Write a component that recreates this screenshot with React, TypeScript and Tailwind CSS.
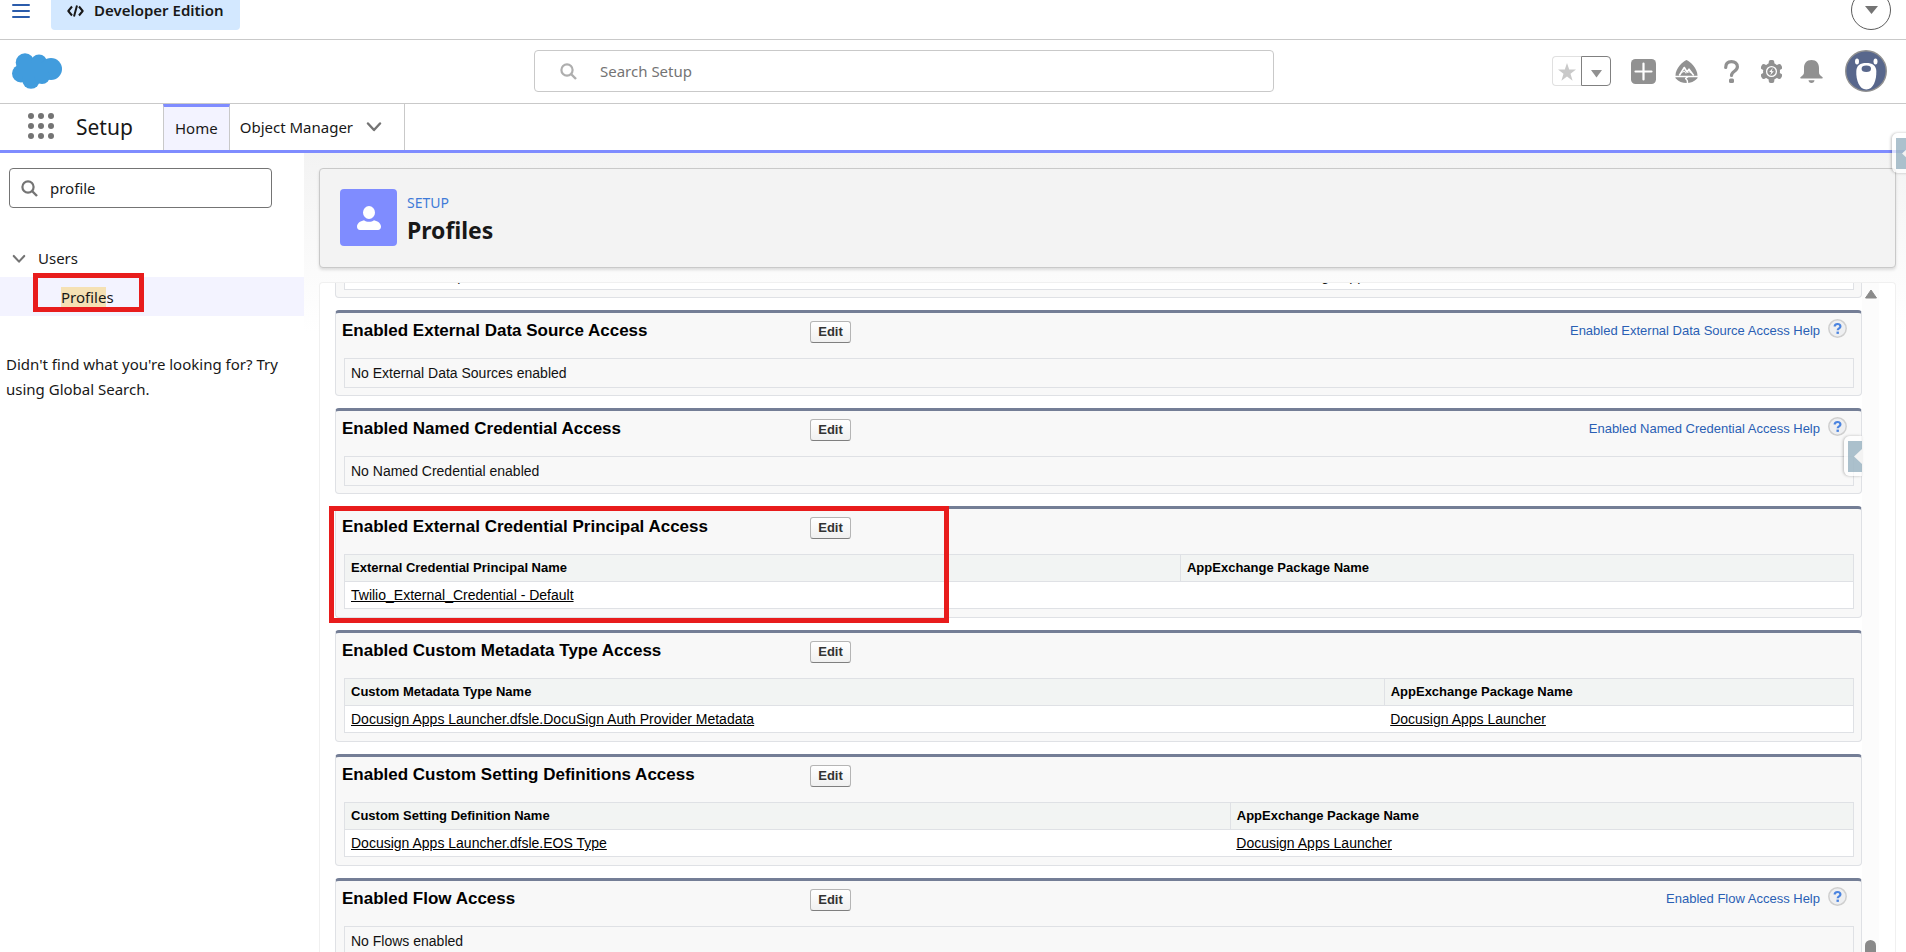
import React, { useState } from 'react';

interface Column {
  label: string;
  width: string;
}

interface Section {
  title: string;
  help?: string;
  empty?: string;
  columns?: Column[];
  row?: string[];
}

const SECTIONS: Section[] = [
  {
    title: 'Enabled External Data Source Access',
    help: 'Enabled External Data Source Access Help',
    empty: 'No External Data Sources enabled',
  },
  {
    title: 'Enabled Named Credential Access',
    help: 'Enabled Named Credential Access Help',
    empty: 'No Named Credential enabled',
  },
  {
    title: 'Enabled External Credential Principal Access',
    columns: [
      { label: 'External Credential Principal Name', width: '55.4%' },
      { label: 'AppExchange Package Name', width: '44.6%' },
    ],
    row: ['Twilio_External_Credential - Default', ''],
  },
  {
    title: 'Enabled Custom Metadata Type Access',
    columns: [
      { label: 'Custom Metadata Type Name', width: '68.9%' },
      { label: 'AppExchange Package Name', width: '31.1%' },
    ],
    row: ['Docusign Apps Launcher.dfsle.DocuSign Auth Provider Metadata', 'Docusign Apps Launcher'],
  },
  {
    title: 'Enabled Custom Setting Definitions Access',
    columns: [
      { label: 'Custom Setting Definition Name', width: '58.7%' },
      { label: 'AppExchange Package Name', width: '41.3%' },
    ],
    row: ['Docusign Apps Launcher.dfsle.EOS Type', 'Docusign Apps Launcher'],
  },
  {
    title: 'Enabled Flow Access',
    help: 'Enabled Flow Access Help',
    empty: 'No Flows enabled',
  },
];

const HIGHLIGHTED = 'Enabled External Credential Principal Access';

const SearchIcon = ({ className }: { className: string }) => (
  <svg className={className} viewBox="0 0 17 17" fill="none" stroke="currentColor" aria-hidden="true">
    <circle cx="7" cy="7" r="5.6" strokeWidth="2.2" />
    <path d="M11 11l5 5" strokeWidth="2.4" />
  </svg>
);

const Chevron = ({ className }: { className: string }) => (
  <svg className={className} viewBox="0 0 16 10" fill="none" stroke="currentColor" strokeWidth="2.4" strokeLinecap="round" strokeLinejoin="round" aria-hidden="true">
    <path d="M2 1.5l6 6.5 6-6.5" />
  </svg>
);

const TopBar: React.FC = () => (
  <div className="flex h-10 items-start border-b border-[#c9c9c9]">
    <button aria-label="Menu" className="ml-3 pt-1 text-[#2b5cab]">
      <svg className="h-[14px] w-[18px]" viewBox="0 0 18 14" fill="none" stroke="currentColor" strokeWidth="2" strokeLinecap="round">
        <path d="M1 1h16M1 7h16M1 13h16" />
      </svg>
    </button>
    <div className="ml-[21px] flex h-[30px] items-start gap-[10px] rounded-b-sm bg-[#d3e8ff] px-4 text-[15px] leading-5 font-semibold">
      <svg className="mt-[5px] h-3 w-[17px]" viewBox="0 0 17 12" fill="none" stroke="currentColor" strokeWidth="2" strokeLinejoin="round" aria-hidden="true">
        <path d="M5 1.5L1.3 6 5 10.500M12 1.500L15.700 6 12 10.500M10 0.500L7 11.500" />
      </svg>
      <span>Developer Edition</span>
    </div>
    <button aria-label="More" className="mr-[15px] ml-auto -mt-[10px] flex h-10 w-10 items-center justify-center rounded-full border border-[#5c5c5c]">
      <svg className="h-2 w-[13px] text-[#747474]" viewBox="0 0 13 8" fill="currentColor"><path d="M0 0h13L6.500 8z" /></svg>
    </button>
  </div>
);

const HeaderIcons: React.FC = () => (
  <div className="flex items-center text-[#919191]">
    <div className="flex h-[30px] w-[59px]">
      <button aria-label="Favorite" className="flex w-[29px] items-center justify-center rounded-l border border-r-0 border-[#e0e0e0] text-[#c9c9c9]">
        <svg className="mt-[2px] h-[18px] w-[18px]" viewBox="0 0 18 18" fill="currentColor"><path d="M9 0l2.200 6.600H18l-5.500 4.200 2.100 7L9 13.600 3.400 17.800l2.100-7L0 6.600h6.800z" /></svg>
      </button>
      <button aria-label="Favorites list" className="flex w-[30px] items-center justify-center rounded-r border border-[#808080]">
        <svg className="mt-[6px] h-2 w-[11px]" viewBox="0 0 11 8" fill="currentColor"><path d="M0 0h11L5.500 7.500z" /></svg>
      </button>
    </div>
    <button aria-label="Global actions" className="ml-5">
      <svg className="h-[25px] w-[25px]" viewBox="0 0 25 25">
        <rect width="25" height="25" rx="4.500" fill="currentColor" />
        <path d="M12.500 4.500v16M4.500 12.500h16" stroke="#fff" strokeWidth="2.200" strokeLinecap="round" />
      </svg>
    </button>
    <button aria-label="Guidance Center" className="ml-[19px]">
      <svg className="h-[23px] w-[23px]" viewBox="0 0 23 23">
        <path d="M11.500 0C15 1.500 22.500 8 22.500 15.500c0 1 .3 2.500-.3 3-3 3-6.500 4.500-10.700 4.500S3.500 21.500.800 18.500c-.6-.5-.3-2-.3-3C.500 8 8 1.500 11.500 0z" fill="currentColor" />
        <path d="M0 16.500h23" stroke="#fff" strokeWidth="1.500" />
        <path d="M4.300 15.500l5-8 2.700 4.500 2-2.800 4.700 6.300" fill="none" stroke="#fff" strokeWidth="1.600" strokeLinejoin="round" />
        <path d="M7.500 12.500l1.800-1.500 1.700 2.500M12.500 13l1.500-1.500 2 1.500" fill="none" stroke="#fff" strokeWidth="1" />
        <path d="M13 16.500c-1.500 1.500-3.500 1.500-1.500 3 1 .8 1.200 1.500.8 3.500" fill="none" stroke="#fff" strokeWidth="1.500" />
      </svg>
    </button>
    <button aria-label="Help" className="ml-[26px]">
      <svg className="h-[23px] w-[15px]" viewBox="0 0 15 23">
        <path d="M1.700 7.500C1.700 3.700 4 1.600 7.500 1.600s5.900 2 5.900 5.200c0 4.700-5.900 4.200-5.900 8.700" fill="none" stroke="currentColor" strokeWidth="3.200" strokeLinecap="round" />
        <rect x="5" y="18.500" width="5" height="4.500" rx="1.500" fill="currentColor" />
      </svg>
    </button>
    <button aria-label="Setup" className="ml-[22px]">
      <svg className="h-[23px] w-[21px]" viewBox="0 0 21 23">
        <g fill="currentColor">
          <circle cx="10.500" cy="11.500" r="8.500" />
          <rect x="7.700" y="0" width="5.600" height="23" rx="2" />
          <rect x="7.700" y="0" width="5.600" height="23" rx="2" transform="rotate(60 10.500 11.500)" />
          <rect x="7.700" y="0" width="5.600" height="23" rx="2" transform="rotate(120 10.500 11.500)" />
        </g>
        <circle cx="10.500" cy="11.500" r="4.900" fill="none" stroke="#fff" strokeWidth="1.300" />
        <path d="M11.800 8L8.300 12h2l-1 3.300 3.500-4.100h-2.100z" fill="#fff" />
      </svg>
    </button>
    <button aria-label="Notifications" className="ml-[18px]">
      <svg className="h-[23px] w-[23px]" viewBox="0 0 23 23" fill="currentColor">
        <path d="M11.500 0C6.500 0 4 3.300 4 8v4c0 2.500-1.200 3.600-3 4.700-1 .6-1 1.800 0 1.800h21c1 0 1-1.200 0-1.800-1.800-1.100-3-2.200-3-4.700V8c0-4.700-2.500-8-7.500-8z" />
        <path d="M8.500 20.300h6c0 1.600-1.400 2.700-3 2.700s-3-1.100-3-2.700z" />
      </svg>
    </button>
    <button aria-label="View profile" className="ml-[22px]">
      <svg className="h-[42px] w-[42px]" viewBox="0 0 42 42">
        <circle cx="21" cy="21" r="20.300" fill="#58678c" stroke="#919191" strokeWidth="1.400" />
        <g fill="#fff">
          <ellipse cx="12" cy="11.500" rx="2" ry="3" />
          <ellipse cx="30.500" cy="11.500" rx="2" ry="3" />
          <path d="M21.300 13c6.200 0 9.700 2.500 10 8 .4 9-3 18.500-10 18.500S10.900 30 11.300 21c.3-5.500 3.800-8 10-8z" />
        </g>
        <ellipse cx="21.300" cy="18.800" rx="4.700" ry="3.300" fill="#58678c" />
      </svg>
    </button>
  </div>
);

const GlobalHeader: React.FC = () => (
  <header className="grid h-16 grid-cols-[522fr_740fr_613fr] items-center border-b border-[#c9c9c9] pr-[19px] pb-px pl-3">
    <svg className="h-9 w-[50px] text-[#419cdd]" viewBox="0 0 50 36" fill="currentColor" aria-label="Salesforce">
      <circle cx="13" cy="9.500" r="9.300" />
      <circle cx="27" cy="9.500" r="8" />
      <circle cx="39" cy="16" r="11" />
      <circle cx="9" cy="20.500" r="9" />
      <circle cx="19" cy="27" r="8.800" />
      <circle cx="30" cy="23" r="8" />
      <path d="M8 10h28v13H8z" />
    </svg>
    <label className="flex h-[42px] items-center rounded border border-[#c9c9c9] px-[25px]">
      <SearchIcon className="h-[17px] w-[17px] shrink-0 text-[#aeaeae]" />
      <input type="search" aria-label="Search Setup" placeholder="Search Setup" className="ml-[23px] w-full bg-transparent text-[15px] outline-none placeholder:text-[#747474]" />
    </label>
    <div className="flex justify-end">
      <HeaderIcons />
    </div>
  </header>
);

const NavBar: React.FC = () => (
  <nav className="flex h-[49px] items-stretch border-b-[3px] border-[#7f8cff] pl-7">
    <button aria-label="App Launcher" className="mt-[9px] grid h-[26px] w-[26px] grid-cols-3 gap-1">
      {Array.from({ length: 9 }, (_, i) => <span key={i} className="h-[6px] w-[6px] rounded-full bg-[#747474]" />)}
    </button>
    <span className="ml-[22px] w-[87px] text-[21px] leading-[46px]">Setup</span>
    <a href="#home" className="border-x border-t-[3px] border-x-[#c9c9c9] border-t-[#7f8cff] bg-[#f3f3ff] px-[11px] text-[15px] leading-[42px]">Home</a>
    <div className="flex items-center border-r border-[#c9c9c9] pr-[22px] pl-[10px]">
      <a href="#objects" className="text-[15px] leading-[46px]">Object Manager</a>
      <button aria-label="Object Manager menu" className="ml-[13px] text-[#747474]"><Chevron className="h-[10px] w-4" /></button>
    </div>
  </nav>
);

const Sidebar: React.FC = () => {
  const [query, setQuery] = useState('profile');

  return (
    <aside className="w-76 shrink-0 bg-white text-[15px]">
      <label className="mt-[15px] mr-8 ml-[9px] flex h-10 items-center rounded border border-[#747474] px-[11px]">
        <SearchIcon className="h-[17px] w-[17px] shrink-0 text-[#747474]" />
        <input type="text" aria-label="Quick Find" value={query} onChange={e => setQuery(e.target.value)} className="ml-3 w-full bg-transparent outline-none" />
      </label>
      <div className="mt-8 flex h-[37px] items-center pl-3">
        <button aria-label="Collapse Users" className="text-[#747474]"><Chevron className="h-[10px] w-[14px]" /></button>
        <a href="#users" className="ml-3">Users</a>
      </div>
      <div className="relative flex h-[39px] items-center bg-[#f3f3ff] pl-[61px]">
        <a href="#profiles" className="leading-[22px]"><mark className="bg-[#f5e1b4] text-inherit">Profile</mark>s</a>
        <div className="pointer-events-none absolute -top-1 left-[33px] h-[39px] w-[111px] border-5 border-[#e81c1c]" />
      </div>
      <p className="mt-[36px] pr-2 pl-[6px] leading-[25px]">Didn't find what you're looking for? Try using Global Search.</p>
    </aside>
  );
};

const SideTab = ({ className }: { className: string }) => (
  <button aria-label="Expand panel" className={`absolute flex h-10 w-[18px] items-center justify-end rounded-l-md bg-white/70 py-1 shadow-[-1px_0_3px_rgba(0,0,0,0.25)] ${className}`}>
    <span className="flex h-[31px] w-[14px] items-center justify-end bg-[#7fa0b2]/65">
      <svg className="h-[15px] w-2" viewBox="0 0 8 15" fill="#f3f3f3"><path d="M8 0v15L0 7.500z" /></svg>
    </span>
  </button>
);

const HelpIcon: React.FC = () => (
  <svg className="h-[19px] w-[19px]" viewBox="0 0 19 19" aria-hidden="true">
    <circle cx="9.500" cy="9.500" r="8.700" fill="#eeeff1" stroke="#cfcfcf" strokeWidth="1.500" />
    <path d="M6.700 7.600C6.700 5.800 7.900 5 9.500 5s2.900.8 2.900 2.400c0 2-2.700 1.800-2.700 3.900" fill="none" stroke="#4b84e0" strokeWidth="2.200" />
    <rect x="8.500" y="12.600" width="2.400" height="2.300" fill="#4b84e0" />
  </svg>
);

const SectionCard: React.FC<{ section: Section }> = ({ section }) => (
  <section className="relative rounded border border-t-[3px] border-[#dfe1e5] border-t-[#747e96] bg-[#f8f8f8] px-[7px] pb-[7px]">
    <div className="flex h-[45px] items-start">
      <h2 className="-ml-px w-[468px] pt-[7px] text-[17px] leading-[22px] font-bold text-black">{section.title}</h2>
      <button className="mt-2 h-[22px] w-[41px] rounded-[3px] border border-[#b5b5b5] border-b-[#7f7f7f] bg-linear-to-b from-white to-[#f0f0f0] text-[13px] leading-5 font-bold text-[#333]">Edit</button>
      {section.help && (
        <a href="#help" className="mr-[7px] ml-auto flex gap-2 pt-[6px] text-[13px] leading-[24px] text-[#2a5fb4]">
          {section.help}
          <HelpIcon />
        </a>
      )}
    </div>
    {section.empty && <div className="ml-px h-[30px] border border-[#dfe1e5] px-[6px] text-[14px] leading-[28px] text-[#111]">{section.empty}</div>}
    {section.columns && (
      <div className="pb-px pl-px">
        <table className="w-full table-fixed border-collapse border border-[#dfe1e5] text-left text-black">
          <thead>
            <tr className="h-[27px] bg-[#f2f4f3] text-[13px]">
              {section.columns.map(col => (
                <th key={col.label} style={{ width: col.width }} className="border border-[#dfe1e5] px-[6px] py-0 leading-5 font-bold">{col.label}</th>
              ))}
            </tr>
          </thead>
          <tbody>
            <tr className="h-[27px] bg-white text-[14px]">
              {section.row?.map((cell, i) => (
                <td key={i} className="px-[6px] py-0 leading-5">{cell && <a href="#item" className="underline">{cell}</a>}</td>
              ))}
            </tr>
          </tbody>
        </table>
      </div>
    )}
    {section.title === HIGHLIGHTED && (
      <div className="pointer-events-none absolute -top-[3px] -left-[7px] h-[117px] w-[620px] border-5 border-[#e81c1c]" />
    )}
  </section>
);

const App: React.FC = () => (
  <div className="relative flex h-screen flex-col overflow-hidden bg-white font-['Noto_Sans',sans-serif] text-[#181818]">
    <TopBar />
    <GlobalHeader />
    <NavBar />
    <div className="flex min-h-0 flex-1">
      <Sidebar />
      <main className="flex min-w-0 flex-1 flex-col bg-linear-to-b from-[#f3f3f3] to-white to-[180px] pt-[15px] pr-[10px] pl-[15px]">
        <div className="flex h-[100px] shrink-0 items-center gap-[10px] rounded border border-[#c9c9c9] bg-[#f3f3f3] px-5 pb-px shadow-[0_2px_3px_rgba(0,0,0,0.12)]">
          <div className="flex h-[57px] w-[57px] items-center justify-center rounded bg-[#7f8cff]">
            <svg className="h-6 w-6" viewBox="0 0 24 24" fill="#fff" aria-hidden="true">
              <ellipse cx="12" cy="6.500" rx="6" ry="6.500" />
              <path d="M7 14.200c1.500 1 3 1.500 5 1.500s3.500-.5 5-1.500c4 .8 7 3.300 7 6.300 0 2.200-1.200 3.500-3 3.500H3c-1.800 0-3-1.300-3-3.500 0-3 3-5.500 7-6.300z" />
            </svg>
          </div>
          <div>
            <p className="text-[14px] leading-6 text-[#3f7bd8]">SETUP</p>
            <h1 className="text-[23px] leading-[30px] font-bold">Profiles</h1>
          </div>
        </div>
        <div className="mt-[14px] flex min-h-0 flex-1 overflow-hidden rounded-t border border-b-0 border-[#f0f0f0] bg-white pr-4 pl-[15px]">
          <div className="relative flex min-w-0 flex-1 flex-col justify-start font-['Liberation_Sans',Arial,sans-serif]">
            {/* tail of the section scrolled off the top */}
            <div className="mb-3 flex h-[15px] shrink-0 flex-col justify-end overflow-hidden rounded-b border border-t-0 border-[#dfe1e5] bg-[#f8f8f8] pr-[7px] pb-[7px] pl-2">
              <table className="w-full shrink-0 table-fixed border border-[#dfe1e5] bg-white text-[14px]">
                <tbody>
                  <tr className="h-[27px] align-bottom">
                    <td className="w-[61.500%] px-[6px] pb-[3px] leading-5">dfsle.ViewEnvelope</td>
                    <td className="px-[6px] pb-[3px] leading-5">Docusign Apps Launcher</td>
                  </tr>
                </tbody>
              </table>
            </div>
            <div className="flex flex-col gap-3">
              {SECTIONS.map(section => <SectionCard key={section.title} section={section} />)}
            </div>
            <SideTab className="top-[153px] right-0" />
          </div>
          <div className="flex w-[17px] flex-col items-center justify-between bg-[#fcfcfc] pt-[6px] text-[#8a8a8a]">
            <svg className="h-[10px] w-3" viewBox="0 0 12 10" fill="currentColor" stroke="currentColor" strokeLinejoin="round" aria-hidden="true"><path d="M6 1L11.500 9H.5z" /></svg>
            <span className="h-3 w-[11px] rounded-t-md bg-current" />
          </div>
        </div>
      </main>
    </div>
    <SideTab className="top-[133px] -right-1" />
  </div>
);

export default App;
